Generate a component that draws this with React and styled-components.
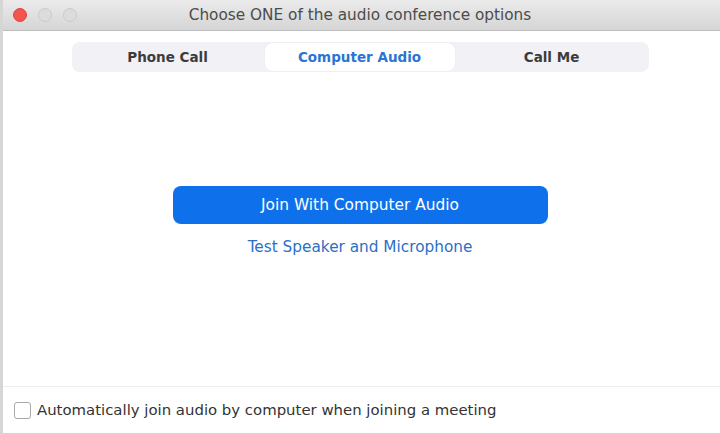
import React, { useState } from 'react';
import styled, { createGlobalStyle } from 'styled-components';

const Global = createGlobalStyle`
  html, body {
    margin: 0;
    padding: 0;
    background: #ffffff;
  }
  body {
    font-family: "DejaVu Sans", Verdana, sans-serif;
  }
`;

const Window = styled.div`
  width: 720px;
  height: 433px;
  display: flex;
  flex-direction: column;
  background: #ffffff;
  overflow: hidden;
  border-left: 3px solid #d6d6d6;
  box-sizing: border-box;
`;

const TitleBar = styled.div`
  position: relative;
  height: 30px;
  flex-shrink: 0;
  display: flex;
  align-items: center;
  justify-content: center;
  background: linear-gradient(#ebebeb, #d5d5d5);
  border-bottom: 1px solid #bdbdbd;
  margin-left: -3px;
`;

const Lights = styled.div`
  position: absolute;
  left: 13px;
  top: 8px;
  display: flex;
  gap: 11px;
`;

const Light = styled.span`
  width: 14px;
  height: 14px;
  border-radius: 50%;
  box-sizing: border-box;
  background: ${p => (p.$red ? '#f25450' : '#dcdcdc')};
  border: 1px solid ${p => (p.$red ? '#e0443f' : '#cacaca')};
`;

const Title = styled.div`
  font-size: 15.3px;
  color: #4b4b4b;
  margin-top: -1px;
`;

const Body = styled.div`
  flex: 1;
  display: flex;
  flex-direction: column;
  align-items: center;
  padding-top: 11px;
`;

const Segments = styled.div`
  display: grid;
  grid-template-columns: repeat(3, 192px);
  width: 577px;
  height: 30px;
  margin-left: -3px;
  padding: 1px 0;
  box-sizing: border-box;
  background: #f1f1f6;
  border-radius: 8px;
`;

const Segment = styled.button`
  border: none;
  margin: 0 1px;
  border-radius: 7px;
  font-family: inherit;
  font-size: 13.5px;
  font-weight: bold;
  cursor: pointer;
  background: ${p => (p.$active ? '#ffffff' : 'transparent')};
  color: ${p => (p.$active ? '#2a74d3' : '#3c3c3c')};
  box-shadow: ${p => (p.$active ? '0 0 1px rgba(0,0,0,0.12)' : 'none')};
`;

const Main = styled.div`
  flex: 1;
  display: flex;
  flex-direction: column;
  align-items: center;
  padding-top: 114px;
  margin-left: -3px;
`;

const JoinButton = styled.button`
  width: 375px;
  height: 38px;
  border: none;
  border-radius: 8px;
  background: #0e71eb;
  color: #ffffff;
  font-family: inherit;
  font-size: 15.4px;
  cursor: pointer;
`;

const TestLink = styled.a`
  margin-top: 14px;
  font-size: 15.3px;
  color: #2b6fc6;
  text-decoration: none;
  cursor: pointer;
`;

const Footer = styled.label`
  height: 46px;
  flex-shrink: 0;
  display: flex;
  align-items: center;
  gap: 6px;
  padding-left: 11px;
  border-top: 1px solid #ececec;
  font-size: 14.9px;
  color: #333333;
  cursor: pointer;
`;

const Check = styled.span`
  width: 17px;
  height: 17px;
  box-sizing: border-box;
  border: 1px solid #a8a8a8;
  border-radius: 3px;
  background: #ffffff;
`;

const tabs = ['Phone Call', 'Computer Audio', 'Call Me'];

export default function App() {
  const [tab, setTab] = useState(1);
  return (
    <>
      <Global />
      <Window>
        <TitleBar>
          <Lights>
            <Light $red />
            <Light />
            <Light />
          </Lights>
          <Title>Choose ONE of the audio conference options</Title>
        </TitleBar>
        <Body>
          <Segments>
            {tabs.map((t, i) => (
              <Segment key={t} $active={tab === i} onClick={() => setTab(i)}>
                {t}
              </Segment>
            ))}
          </Segments>
          <Main>
            <JoinButton>Join With Computer Audio</JoinButton>
            <TestLink>Test Speaker and Microphone</TestLink>
          </Main>
        </Body>
        <Footer>
          <Check />
          Automatically join audio by computer when joining a meeting
        </Footer>
      </Window>
    </>
  );
}
